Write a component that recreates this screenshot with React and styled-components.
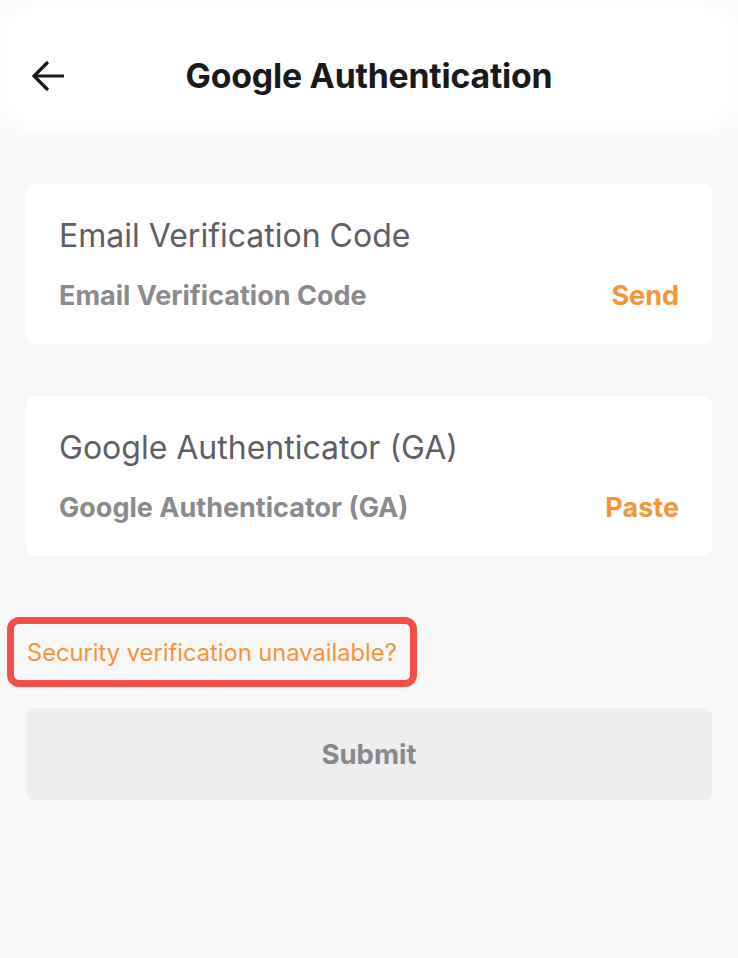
import React from "react";
import styled, { createGlobalStyle } from "styled-components";

const Global = createGlobalStyle`
  html, body { margin: 0; padding: 0; background: #f7f7f7; }
  body { font-family: Inter, "Noto Sans", sans-serif; -webkit-font-smoothing: antialiased; }
  * { box-sizing: border-box; }
`;

const Page = styled.div`
  width: 738px;
  min-height: 958px;
  background: #f7f7f7;
  display: flex;
  flex-direction: column;
`;

const Header = styled.header`
  height: 135px;
  background: linear-gradient(#f9f9f9, #fcfcfc 20%, #fcfcfc 80%, #f9f9f9);
  padding: 10px 10px 14px;
  display: flex;
`;

const HeaderInner = styled.div`
  flex: 1;
  background: #ffffff;
  border-radius: 32px;
  box-shadow: 0 0 16px 8px rgba(255, 255, 255, 0.85);
  display: grid;
  grid-template-columns: 90px 1fr 90px;
  align-items: center;
  padding-top: 21px;
`;

const BackButton = styled.button`
  border: 0;
  background: none;
  padding: 0 0 0 21px;
  display: flex;
  align-items: center;
  cursor: pointer;
`;

const Title = styled.h1`
  margin: 0;
  text-align: center;
  font-size: 33.8px;
  line-height: 44px;
  font-weight: 700;
  color: #1a1a1a;
  letter-spacing: -0.2px;
`;

const Content = styled.main`
  padding: 49px 26px 0;
  display: flex;
  flex-direction: column;
`;

const Card = styled.section`
  background: #ffffff;
  border-radius: 9px;
  height: 160px;
  padding: 30px 33px 0;
  display: flex;
  flex-direction: column;
  margin-bottom: 52px;
`;

const Label = styled.div`
  font-size: 32px;
  font-weight: 400;
  color: #5f5f63;
  line-height: 44px;
`;

const InputRow = styled.div`
  margin-top: 21px;
  display: flex;
  align-items: center;
  justify-content: space-between;
  height: 32px;
`;

const Placeholder = styled.span`
  font-size: 27px;
  font-weight: 700;
  color: #8a8a8c;
`;

const Action = styled.span`
  font-size: 27px;
  font-weight: 700;
  color: #f5943a;
`;

const LinkBox = styled.div`
  margin: 9px 0 21px -19px;
  align-self: flex-start;
  border: 7px solid #f64f4a;
  border-radius: 12px;
  padding: 0 13px;
  height: 70px;
  display: flex;
  align-items: center;
`;

const LinkText = styled.span`
  font-size: 23.7px;
  color: #f5943a;
  font-weight: 400;
`;

const Submit = styled.button`
  height: 92px;
  border: 0;
  border-radius: 9px;
  background: #ededed;
  font-family: inherit;
  font-size: 27.5px;
  font-weight: 700;
  color: #89898d;
`;

const ArrowIcon = () => (
  <svg width="34" height="32" viewBox="0 0 34 32" fill="none">
    <path d="M33 16H3.5M17 2L3 16L17 30" stroke="#1a1a1a" strokeWidth="3.2" strokeLinecap="butt" strokeLinejoin="miter" />
  </svg>
);

const fields = [
  { label: "Email Verification Code", action: "Send" },
  { label: "Google Authenticator (GA)", action: "Paste" },
];

export default function App() {
  return (
    <Page>
      <Global />
      <Header>
        <HeaderInner>
          <BackButton aria-label="Back"><ArrowIcon /></BackButton>
          <Title>Google Authentication</Title>
          <div />
        </HeaderInner>
      </Header>
      <Content>
        {fields.map((f) => (
          <Card key={f.label}>
            <Label>{f.label}</Label>
            <InputRow>
              <Placeholder>{f.label}</Placeholder>
              <Action>{f.action}</Action>
            </InputRow>
          </Card>
        ))}
        <LinkBox>
          <LinkText>Security verification unavailable?</LinkText>
        </LinkBox>
        <Submit>Submit</Submit>
      </Content>
    </Page>
  );
}
